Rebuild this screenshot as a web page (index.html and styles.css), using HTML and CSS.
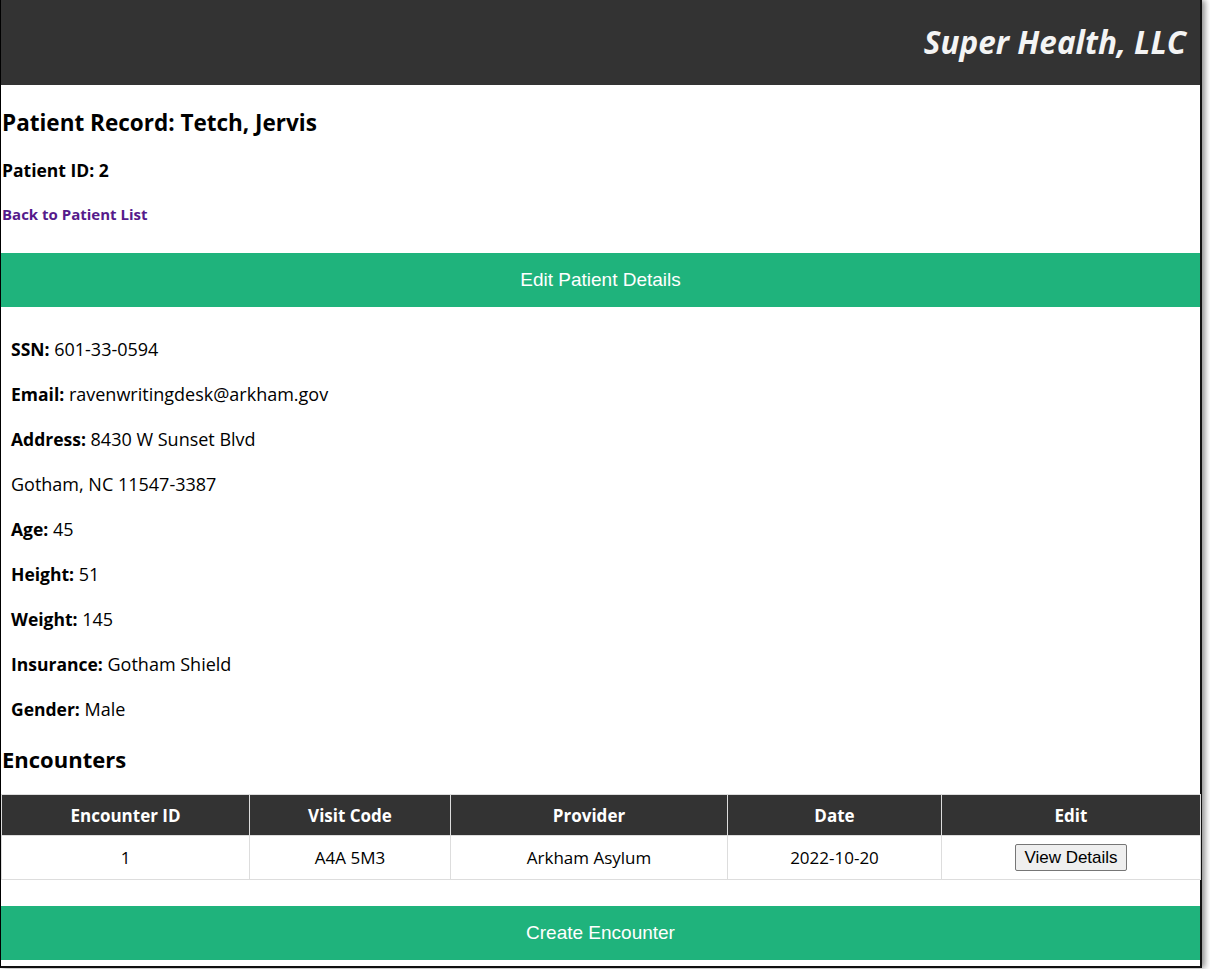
FILE: index.html
```html
<!DOCTYPE html>
<html>
<head>
<meta charset="utf-8">
<link rel="stylesheet" href="styles.css">
</head>
<body>
<div class="window">
  <header class="topbar"><h1 class="brand">Super Health, LLC</h1></header>
  <h2 class="title">Patient Record: Tetch, Jervis</h2>
  <h4 class="pid">Patient ID: 2</h4>
  <a class="back" href="#">Back to Patient List</a>
  <button class="wide-btn edit-btn">Edit Patient Details</button>
  <div class="details">
    <p><b>SSN:</b> 601-33-0594</p>
    <p><b>Email:</b> ravenwritingdesk@arkham.gov</p>
    <p><b>Address:</b> 8430 W Sunset Blvd</p>
    <p>Gotham, NC 11547-3387</p>
    <p><b>Age:</b> 45</p>
    <p><b>Height:</b> 51</p>
    <p><b>Weight:</b> 145</p>
    <p><b>Insurance:</b> Gotham Shield</p>
    <p><b>Gender:</b> Male</p>
  </div>
  <h3 class="enc-title">Encounters</h3>
  <table class="enc">
    <colgroup>
      <col class="c1"><col class="c2"><col class="c3"><col class="c4"><col class="c5">
    </colgroup>
    <thead>
      <tr><th>Encounter ID</th><th>Visit Code</th><th>Provider</th><th>Date</th><th>Edit</th></tr>
    </thead>
    <tbody>
      <tr><td>1</td><td>A4A 5M3</td><td>Arkham Asylum</td><td>2022-10-20</td><td><button class="view-btn">View Details</button></td></tr>
    </tbody>
  </table>
  <button class="wide-btn create-btn">Create Encounter</button>
  <div class="bottom-space"></div>
</div>
</body>
</html>
```

FILE: styles.css
```css
html, body {
  margin: 0;
  padding: 0;
  background: #ffffff;
}
body {
  font-family: "Open Sans", "Noto Sans", sans-serif;
  color: #000;
  height: 969px;
  overflow: hidden;
}
.window {
  width: 1199px;
  border-left: 1px solid #000;
  border-right: 2px solid #111;
  border-bottom: 2px solid #111;
  box-shadow: 3px 0 6px rgba(0,0,0,0.45);
  background: #fff;
  display: flex;
  flex-direction: column;
  align-items: flex-start;
}
.topbar {
  width: 100%;
  height: 85px;
  background: #333333;
  display: flex;
  align-items: center;
  justify-content: flex-end;
  box-sizing: border-box;
  padding-right: 14px;
}
.brand {
  margin: 0;
  font-size: 31.5px;
  font-weight: 700;
  font-style: italic;
  color: #f4f4f4;
  line-height: 40px;
  padding-bottom: 2px;
}
.title {
  margin: 22px 0 0 1px;
  font-size: 22.5px;
  line-height: 32px;
  font-weight: 700;
}
.pid {
  margin: 19px 0 0 1px;
  font-size: 17.5px;
  line-height: 24px;
  font-weight: 700;
}
.back {
  margin: 22px 0 0 1px;
  font-size: 15px;
  line-height: 20px;
  font-weight: 700;
  color: #551a8b;
  text-decoration: none;
}
.wide-btn {
  width: 100%;
  height: 54px;
  border: none;
  background: #1fb37c;
  color: #ffffff;
  font-family: "Liberation Sans", Arial, sans-serif;
  font-size: 19px;
  padding: 0;
  margin: 0;
}
.edit-btn {
  margin-top: 29px;
}
.details {
  padding: 30px 0 0 10px;
}
.details p {
  margin: 0 0 21px 0;
  font-size: 18px;
  line-height: 24px;
}
.details b {
  font-size: 17.5px;
}
.details p:last-child {
  margin-bottom: 0;
}
.enc-title {
  margin: 24px 0 0 1px;
  font-size: 22px;
  line-height: 28px;
  font-weight: 700;
}
.enc {
  margin-top: 21px;
  width: 100%;
  border-collapse: collapse;
  table-layout: fixed;
}
.c1 { width: 248px; }
.c2 { width: 201px; }
.c3 { width: 277px; }
.c4 { width: 214px; }
.c5 { width: 259px; }
.enc th {
  background: #333333;
  color: #fff;
  font-size: 17px;
  font-weight: 700;
  height: 41px;
  padding: 0;
  border: 1px solid #dddddd;
  box-sizing: border-box;
}
.enc td {
  text-align: center;
  font-size: 17px;
  height: 44px;
  padding: 0;
  border: 1px solid #dddddd;
  box-sizing: border-box;
}
.view-btn {
  font-family: "Liberation Sans", Arial, sans-serif;
  font-size: 17px;
  height: 27px;
  padding: 0 8px;
  background: #efefef;
  border: 1px solid #767676;
  border-radius: 2px;
  color: #000;
}
.create-btn {
  margin-top: 26px;
}
.bottom-space {
  height: 6px;
}
```
